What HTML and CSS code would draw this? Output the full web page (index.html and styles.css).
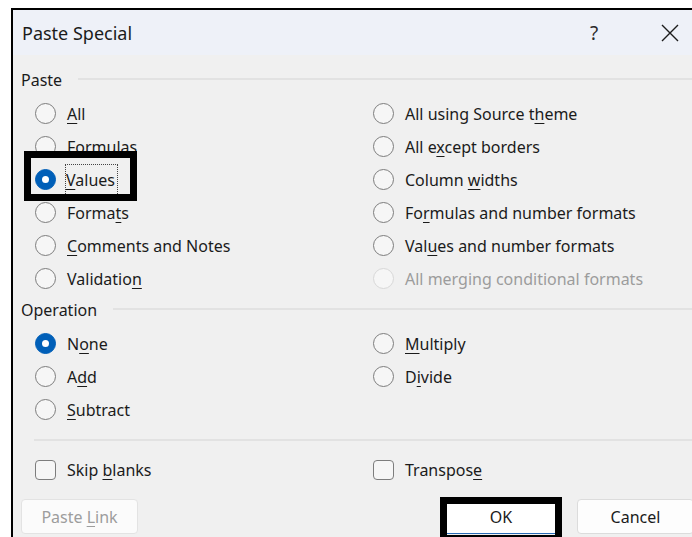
FILE: index.html
```html
<!DOCTYPE html>
<html lang="en">
<head>
<meta charset="utf-8">
<title>Paste Special</title>
<link rel="stylesheet" href="styles.css">
</head>
<body>
<div class="dialog">
  <header class="titlebar">
    <span class="title">Paste Special</span>
    <span class="tb-btn help">?</span>
    <span class="tb-btn close">
      <svg width="18" height="18" viewBox="0 0 18 18"><path d="M1 1 L17 17 M17 1 L1 17" stroke="#1c1c1c" stroke-width="1.4" fill="none"/></svg>
    </span>
  </header>

  <div class="content">
    <div class="group-head"><span>Paste</span></div>
    <div class="options">
      <label class="opt"><span class="radio"></span><span><u>A</u>ll</span></label>
      <label class="opt"><span class="radio"></span><span>All using Source t<u>h</u>eme</span></label>
      <label class="opt"><span class="radio"></span><span><u>F</u>ormulas</span></label>
      <label class="opt"><span class="radio"></span><span>All e<u>x</u>cept borders</span></label>
      <label class="opt marked"><span class="radio on"></span><span class="focus"><u>V</u>alues</span></label>
      <label class="opt"><span class="radio"></span><span>Column <u>w</u>idths</span></label>
      <label class="opt"><span class="radio"></span><span>Forma<u>t</u>s</span></label>
      <label class="opt"><span class="radio"></span><span>Fo<u>r</u>mulas and number formats</span></label>
      <label class="opt"><span class="radio"></span><span><u>C</u>omments and Notes</span></label>
      <label class="opt"><span class="radio"></span><span>Val<u>u</u>es and number formats</span></label>
      <label class="opt"><span class="radio"></span><span>Validatio<u>n</u></span></label>
      <label class="opt disabled"><span class="radio"></span><span>All merging conditional formats</span></label>
    </div>

    <div class="group-head op-head"><span>Operation</span></div>
    <div class="options">
      <label class="opt"><span class="radio on"></span><span>N<u>o</u>ne</span></label>
      <label class="opt"><span class="radio"></span><span><u>M</u>ultiply</span></label>
      <label class="opt"><span class="radio"></span><span>A<u>d</u>d</span></label>
      <label class="opt"><span class="radio"></span><span>D<u>i</u>vide</span></label>
      <label class="opt"><span class="radio"></span><span><u>S</u>ubtract</span></label>
    </div>

    <div class="separator"></div>

    <div class="options checks">
      <label class="opt"><span class="check"></span><span>Skip <u>b</u>lanks</span></label>
      <label class="opt"><span class="check"></span><span>Transpos<u>e</u></span></label>
    </div>

    <div class="buttons">
      <button class="btn disabled-btn">Paste <u>L</u>ink</button>
      <button class="btn ok marked-btn">OK</button>
      <button class="btn cancel">Cancel</button>
    </div>
  </div>
</div>
</body>
</html>
```

FILE: styles.css
```css
html, body {
  margin: 0;
  padding: 0;
  background: #ffffff;
  overflow: hidden;
  height: 537px;
}

body {
  font-family: "Noto Sans", "Open Sans", sans-serif;
  font-size: 16px;
  color: #1b1b1b;
}

.dialog {
  margin: 8px 0 0 11px;
  width: 700px;
  height: 527px;
  overflow: hidden;
  border-top: 2px solid #000;
  border-left: 2px solid #000;
  background: #f0f0f0;
}

/* title bar */
.titlebar {
  height: 45px;
  background: #eef1f8;
  display: flex;
  align-items: center;
  padding-left: 9px;
  padding-right: 20px;
}

.title {
  font-size: 18px;
  flex: 1;
}

.tb-btn {
  width: 46px;
  display: flex;
  justify-content: center;
  align-items: center;
}

.help {
  font-size: 19px;
  color: #2a2a2a;
  margin-right: 30px;
}

.close svg {
  display: block;
}

/* body */
.content {
  padding-top: 13px;
}

.group-head {
  display: flex;
  align-items: center;
  height: 24px;
  padding-left: 8px;
  gap: 16px;
}

.group-head::after {
  content: "";
  flex: 1;
  height: 2px;
  background: #e2e2e2;
  margin-top: -3px;
}

.op-head {
  margin-top: 3px;
}

.options {
  display: grid;
  grid-template-columns: 338px 1fr;
  padding-left: 22px;
  margin-top: 5px;
}

.opt {
  display: flex;
  align-items: center;
  gap: 11px;
  height: 33px;
  position: relative;
}

u {
  text-decoration-thickness: 1px;
  text-underline-offset: 3px;
}

.radio {
  box-sizing: border-box;
  width: 21px;
  height: 21px;
  border: 1px solid #7d7d7d;
  border-radius: 50%;
  background: #f6f6f6;
  flex: none;
  position: relative;
}

.radio.on {
  background: #005fb8;
  border-color: #005fb8;
}

.radio.on::after {
  content: "";
  position: absolute;
  left: 6px;
  top: 6px;
  width: 7px;
  height: 7px;
  border-radius: 50%;
  background: #ffffff;
}

.disabled {
  color: #9c9c9c;
}

.disabled .radio {
  border-color: #d8d8d8;
  background: #f6f6f6;
}

.focus {
  outline: 1px dotted #444;
  outline-offset: 0;
  padding: 4px 2px 4px 0;
  margin-left: -1px;
}

/* black highlight frames */
.marked::before {
  content: "";
  position: absolute;
  left: -11px;
  top: -12px;
  width: 113px;
  height: 50px;
  box-sizing: border-box;
  border: 7px solid #000;
}

.separator {
  margin: 13px 0 0 21px;
  height: 2px;
  background: #e2e2e2;
}

.checks {
  margin-top: 12px;
}

.check {
  box-sizing: border-box;
  width: 21px;
  height: 20px;
  border: 1px solid #7d7d7d;
  border-radius: 4px;
  background: #f6f6f6;
  flex: none;
}

/* buttons */
.buttons {
  display: flex;
  margin-top: 13px;
  padding-left: 8px;
}

.btn {
  font-family: inherit;
  font-size: 16px;
  height: 35px;
  width: 117px;
  border-radius: 4px;
  border: 1px solid #dcdcdc;
  background: #fdfdfd;
  color: #1b1b1b;
  padding: 0;
  position: relative;
}

.disabled-btn {
  color: #9d9d9d;
  border-color: #e3e3e3;
  background: #fbfbfb;
}

.ok {
  width: 122px;
  margin-left: auto;
  margin-right: 15px;
  background: #ffffff;
  border-bottom: 1px solid #2a6cb8;
}

.cancel {
  margin-right: 19px;
}

.marked-btn::before {
  content: "";
  position: absolute;
  left: -1px;
  right: -1px;
  top: -3px;
  height: 45px;
  box-sizing: border-box;
  border: 7px solid #000;
}
```
